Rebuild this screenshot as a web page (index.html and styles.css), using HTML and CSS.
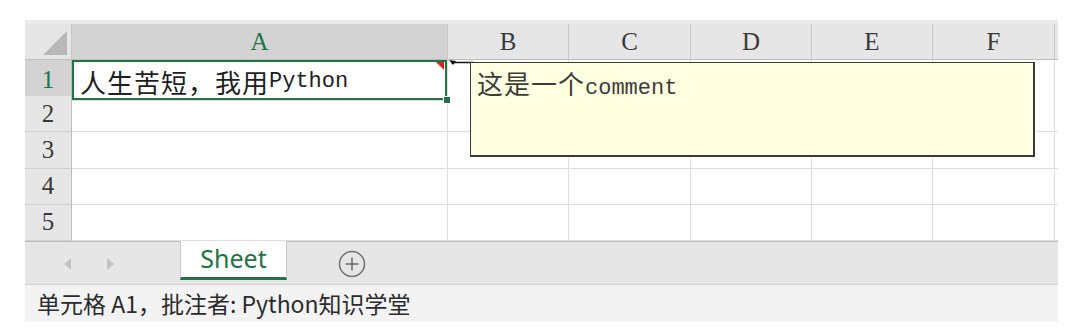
FILE: index.html
```html
<!DOCTYPE html>
<html lang="zh-CN">
<head>
  <meta charset="UTF-8">
  <title>Sheet</title>
  <link rel="stylesheet" href="styles.css">
</head>
<body>
  <div class="book">
    <div class="topband"></div>

    <div class="grid">
      <!-- Cabeçalho das colunas -->
      <div class="row head">
        <div class="corner"><span class="tri"></span></div>
        <div class="colhead sel">A</div>
        <div class="colhead">B</div>
        <div class="colhead">C</div>
        <div class="colhead">D</div>
        <div class="colhead">E</div>
        <div class="colhead">F</div>
        <div class="colhead end"></div>
      </div>

      <div class="row">
        <div class="rowhead sel">1</div>
        <div class="cell active">
          <span class="cjk">人生苦短，我用</span><span class="mono">Python</span>
          <span class="note-mark"></span>
          <span class="handle"></span>
        </div>
        <div class="cell"></div><div class="cell"></div><div class="cell"></div>
        <div class="cell"></div><div class="cell"></div><div class="cell end"></div>
      </div>
      <div class="row">
        <div class="rowhead">2</div>
        <div class="cell"></div><div class="cell"></div><div class="cell"></div><div class="cell"></div>
        <div class="cell"></div><div class="cell"></div><div class="cell end"></div>
      </div>
      <div class="row">
        <div class="rowhead">3</div>
        <div class="cell"></div><div class="cell"></div><div class="cell"></div><div class="cell"></div>
        <div class="cell"></div><div class="cell"></div><div class="cell end"></div>
      </div>
      <div class="row">
        <div class="rowhead">4</div>
        <div class="cell"></div><div class="cell"></div><div class="cell"></div><div class="cell"></div>
        <div class="cell"></div><div class="cell"></div><div class="cell end"></div>
      </div>
      <div class="row">
        <div class="rowhead">5</div>
        <div class="cell"></div><div class="cell"></div><div class="cell"></div><div class="cell"></div>
        <div class="cell"></div><div class="cell"></div><div class="cell end"></div>
      </div>

      <!-- Seta do comentário -->
      <svg class="connector" width="26" height="8" viewBox="0 0 26 8">
        <line x1="3" y1="2.5" x2="26" y2="2.5" stroke="#111" stroke-width="1.5"/>
        <polygon points="1,0 8,1 5,5" fill="#111"/>
      </svg>

      <!-- Caixa do comentário -->
      <div class="comment">
        <span class="cjk">这是一个</span><span class="mono">comment</span>
      </div>
    </div>

    <!-- Barra das abas -->
    <div class="tabbar">
      <div class="nav">
        <span class="arrow left"></span>
        <span class="arrow right"></span>
      </div>
      <div class="tab">Sheet</div>
      <svg class="add" width="28" height="28" viewBox="0 0 28 28">
        <circle cx="14" cy="14" r="12.5" fill="none" stroke="#6f6f6f" stroke-width="1.5"/>
        <line x1="14" y1="7.5" x2="14" y2="20.5" stroke="#6f6f6f" stroke-width="1.6"/>
        <line x1="7.5" y1="14" x2="20.5" y2="14" stroke="#6f6f6f" stroke-width="1.6"/>
      </svg>
    </div>

    <div class="status">单元格 A1，批注者: Python知识学堂</div>
  </div>
</body>
</html>
```

FILE: styles.css
```css
body {
  margin: 0;
  background: #fff;
}

.book {
  width: 1033px;
  margin: 20px 0 0 25px;
}

.topband {
  height: 4px;
  background: #ebebeb;
}

.grid {
  position: relative;
}

.row {
  display: grid;
  grid-template-columns: 47px 376px 121px 122px 121px 121px 122px 3px;
  height: 36px;
}

.row + .row {
  height: 36.2px;
}

.head {
  background: #e6e6e6;
}

/* Cabeçalhos */
.corner,
.colhead,
.rowhead {
  box-sizing: border-box;
  background: #e6e6e6;
  color: #3a3a3a;
  font-family: "Liberation Serif", serif;
  font-size: 25px;
  display: flex;
  align-items: center;
  justify-content: center;
}

.corner {
  position: relative;
  border-right: 1px solid #c8c8c8;
  border-bottom: 1px solid #bdbdbd;
}

.corner .tri {
  position: absolute;
  right: 4px;
  bottom: 4px;
  width: 0;
  height: 0;
  border-left: 24px solid transparent;
  border-bottom: 24px solid #b8b8b8;
}

.colhead {
  border-right: 1px solid #c8c8c8;
  border-bottom: 1px solid #bdbdbd;
}

.colhead.end {
  border-right: none;
}

.rowhead {
  border-right: 1px solid #bdbdbd;
  border-bottom: 1px solid #d0d0d0;
}

.colhead.sel,
.rowhead.sel {
  background: #d3d3d3;
  color: #217346;
}

/* Células */
.cell {
  box-sizing: border-box;
  border-right: 1px solid #dedede;
  border-bottom: 1px solid #dedede;
  background: #fff;
}

.cell.end {
  border-right: none;
}

.cell.active {
  position: relative;
  box-shadow: inset 0 0 0 2px #217346;
  padding: 3px 0 0 8px;
  display: flex;
  align-items: center;
  color: #1e1e1e;
  z-index: 2;
}

.cjk {
  font-family: "Noto Sans CJK SC", sans-serif;
  font-size: 26px;
  letter-spacing: 1px;
}

.mono {
  font-family: "Liberation Mono", monospace;
  font-size: 22px;
}

.note-mark {
  position: absolute;
  top: 2px;
  right: 3px;
  width: 0;
  height: 0;
  border-left: 8px solid transparent;
  border-top: 8px solid #e02020;
}

.handle {
  position: absolute;
  right: -4px;
  bottom: -4px;
  width: 6px;
  height: 6px;
  background: #217346;
  border: 1px solid #fff;
}

.connector {
  position: absolute;
  left: 423px;
  top: 36px;
  z-index: 3;
}

.comment {
  position: absolute;
  left: 445px;
  top: 38px;
  width: 565px;
  height: 95px;
  box-sizing: border-box;
  background: #ffffe1;
  border: 1.5px solid #3a3a3a;
  border-right-width: 2px;
  border-bottom-width: 2px;
  padding: 0 0 0 6px;
  line-height: 40px;
  color: #3c3c3c;
  z-index: 4;
}

.comment .cjk {
  letter-spacing: 1px;
}

/* Abas */
.tabbar {
  display: flex;
  align-items: flex-start;
  height: 44px;
  box-sizing: border-box;
  background: #e6e6e6;
  border-top: 1px solid #bdbdbd;
  border-bottom: 1px solid #d0d0d0;
}

.nav {
  display: flex;
  gap: 36px;
  width: 155px;
  padding: 16px 0 0 39px;
  box-sizing: border-box;
}

.arrow {
  width: 0;
  height: 0;
  border-top: 6px solid transparent;
  border-bottom: 6px solid transparent;
}

.arrow.left {
  border-right: 7px solid #c4c4c4;
}

.arrow.right {
  border-left: 7px solid #c4c4c4;
}

.tab {
  width: 107px;
  height: 39px;
  box-sizing: border-box;
  margin-top: -1px;
  background: #fff;
  border-left: 1px solid #c8c8c8;
  border-right: 1px solid #c8c8c8;
  border-bottom: 3px solid #217346;
  color: #217346;
  font-family: "Noto Sans", sans-serif;
  font-size: 25px;
  line-height: 34px;
  text-align: center;
}

.add {
  margin: 8px 0 0 51px;
}

.status {
  height: 37px;
  background: #f3f3f3;
  padding-left: 12px;
  color: #2b2b2b;
  font-family: "Noto Sans CJK SC", sans-serif;
  font-size: 23px;
  line-height: 37px;
}
```
